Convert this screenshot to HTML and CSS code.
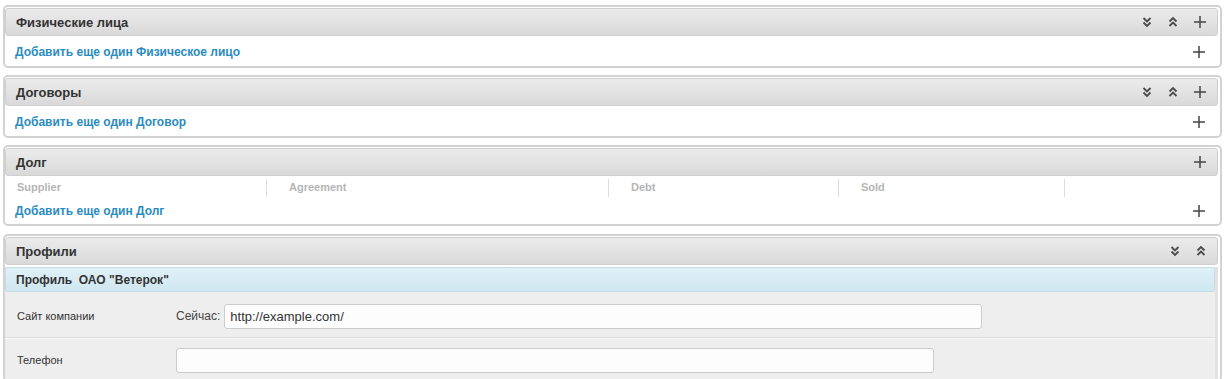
FILE: index.html
```html
<!DOCTYPE html>
<html lang="ru">
<head>
  <meta charset="UTF-8"/>
  <title>Карточка клиента</title>
  <link rel="stylesheet" href="styles.css">
</head>
<body>
  <svg width="0" height="0" class="defs">
    <symbol id="i-down" viewBox="0 0 12 12">
      <path d="M2.5 2 L6 5.5 L9.5 2 M2.5 6.5 L6 10 L9.5 6.5" fill="none" stroke="#4a4a4a" stroke-width="1.8"/>
    </symbol>
    <symbol id="i-up" viewBox="0 0 12 12">
      <path d="M2.5 5.5 L6 2 L9.5 5.5 M2.5 10 L6 6.5 L9.5 10" fill="none" stroke="#4a4a4a" stroke-width="1.8"/>
    </symbol>
    <symbol id="i-plus" viewBox="0 0 14 14">
      <path d="M7 1 V13 M1 7 H13" fill="none" stroke="#444" stroke-width="1.5"/>
    </symbol>
  </svg>

  <div class="panel">
    <div class="panel-head">
      <span class="title">Физические лица</span>
      <span class="tools">
        <svg class="ico"><use href="#i-down"/></svg>
        <svg class="ico"><use href="#i-up"/></svg>
        <svg class="ico plus"><use href="#i-plus"/></svg>
      </span>
    </div>
    <div class="add-row">
      <a href="#">Добавить еще один Физическое лицо</a>
      <svg class="ico plus"><use href="#i-plus"/></svg>
    </div>
  </div>

  <div class="panel">
    <div class="panel-head">
      <span class="title">Договоры</span>
      <span class="tools">
        <svg class="ico"><use href="#i-down"/></svg>
        <svg class="ico"><use href="#i-up"/></svg>
        <svg class="ico plus"><use href="#i-plus"/></svg>
      </span>
    </div>
    <div class="add-row">
      <a href="#">Добавить еще один Договор</a>
      <svg class="ico plus"><use href="#i-plus"/></svg>
    </div>
  </div>

  <div class="panel debt">
    <div class="panel-head">
      <span class="title">Долг</span>
      <span class="tools">
        <svg class="ico plus"><use href="#i-plus"/></svg>
      </span>
    </div>
    <div class="cols">
      <div class="col first">Supplier</div>
      <div class="col">Agreement</div>
      <div class="col">Debt</div>
      <div class="col">Sold</div>
      <div class="col"></div>
    </div>
    <div class="add-row short">
      <a href="#">Добавить еще один Долг</a>
      <svg class="ico plus"><use href="#i-plus"/></svg>
    </div>
  </div>

  <div class="panel last-panel">
    <div class="panel-head">
      <span class="title">Профили</span>
      <span class="tools">
        <svg class="ico"><use href="#i-down"/></svg>
        <svg class="ico"><use href="#i-up"/></svg>
      </span>
    </div>
    <div class="profile">
      <div class="profile-head">Профиль&nbsp; ОАО "Ветерок"</div>
      <div class="field site">
        <div class="label">Сайт компании</div>
        <div class="value">
          <span class="now">Сейчас:</span>
          <input class="inp" type="text" value="http://example.com/">
        </div>
      </div>
      <div class="field phone">
        <div class="label">Телефон</div>
        <div class="value">
          <input class="inp" type="text" value="">
        </div>
      </div>
    </div>
  </div>
</body>
</html>
```

FILE: styles.css
```css
:root {
  --panel-border: #d2d2d2;
  --head-bottom: #d9d9d9;
  --link-color: #2b8cbf;
  --text-color: #333333;
  --muted: #b5b5b5;
  --field-bg: #eeeeee;
}

*, *::before, *::after { box-sizing: border-box; }

html, body { overflow: hidden; }

body {
  margin: 0;
  padding: 5px 5px 0 3px;
  font-family: "Liberation Sans", Arial, sans-serif;
  color: var(--text-color);
  background: #fff;
}

.defs { position: absolute; }

.panel {
  border: 2px solid var(--panel-border);
  border-radius: 5px;
  padding: 1px 2px 0 0;
  margin-bottom: 7px;
  background: #fff;
}

.panel.debt { margin-bottom: 8px; }

.panel-head {
  height: 28px;
  display: flex;
  align-items: center;
  justify-content: space-between;
  padding: 0 10px 0 10px;
  border: 1px solid #cfcfcf;
  border-radius: 3px;
  background: linear-gradient(#ebebeb, var(--head-bottom));
}

.title {
  font-size: 13px;
  font-weight: bold;
  color: #333;
}

.tools {
  display: flex;
  align-items: center;
  gap: 14px;
}

.ico {
  width: 12px;
  height: 12px;
  display: block;
}

.ico.plus {
  width: 14px;
  height: 14px;
}

.add-row {
  height: 30px;
  display: flex;
  align-items: center;
  justify-content: space-between;
  padding: 1px 12px 0 10px;
}

.add-row.short { height: 27px; }

.add-row a {
  font-size: 12px;
  font-weight: bold;
  color: var(--link-color);
  text-decoration: none;
}

.cols {
  display: grid;
  grid-template-columns: 261px 342px 230px 226px 1fr;
  padding-top: 3px;
}

.col {
  height: 18px;
  border-left: 1px solid #dddddd;
  padding-left: 22px;
  font-size: 11px;
  font-weight: bold;
  color: var(--muted);
  line-height: 16px;
}

.col.first {
  border-left: none;
  padding-left: 12px;
}

.last-panel { margin-bottom: 0; }

.profile {
  background: var(--field-bg);
  border-right: 3px solid #e2e2e2;
  margin-top: 2px;
}

.profile-head {
  height: 25px;
  display: flex;
  align-items: center;
  padding-left: 10px;
  font-size: 12px;
  font-weight: bold;
  color: #333;
  border: 1px solid #c6dde7;
  border-radius: 2px;
  background: linear-gradient(#e0f0f7, #cfe7f0);
}

.field {
  display: flex;
  align-items: center;
}

.field.site {
  height: 46px;
  padding-top: 3px;
  border-bottom: 1px solid #dcdcdc;
  box-shadow: 0 1px 0 #fafafa;
}

.field.phone {
  height: 42px;
  padding-top: 2px;
}

.label {
  width: 171px;
  padding-left: 12px;
  font-size: 11px;
  color: #333;
}

.value {
  display: flex;
  align-items: center;
  gap: 4px;
}

.now {
  font-size: 12px;
  color: #444;
}

.inp {
  width: 758px;
  height: 25px;
  border: 1px solid #cccccc;
  border-radius: 3px;
  background: #fdfdfd;
  font: 13px "Liberation Sans", Arial, sans-serif;
  color: #333;
  padding: 0 5px;
  outline: none;
}
```
